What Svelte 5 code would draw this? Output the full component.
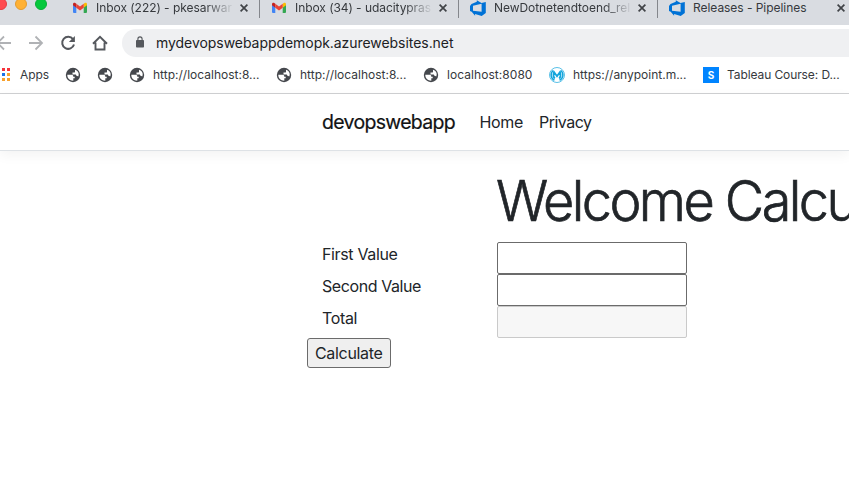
<script>
  const tabs = [
    { icon: 'gmail', label: 'Inbox (222) - pkesarwar', ref: 136, fade: true },
    { icon: 'gmail', label: 'Inbox (34) - udacitypras', ref: 136, fade: true },
    { icon: 'azure', label: 'NewDotnetendtoend_rel', ref: 136, fade: true },
    { icon: 'azure', label: 'Releases - Pipelines', ref: 113.5, fade: false }
  ];
  const bookmarks = [
    { icon: 'globe', gap: 16 },
    { icon: 'globe', gap: 16 },
    { icon: 'globe', label: 'http://localhost:8...', width: 107, gap: 16 },
    { icon: 'globe', label: 'http://localhost:8...', width: 107, gap: 16 },
    { icon: 'globe', label: 'localhost:8080', width: 86, gap: 16 },
    { icon: 'mule', label: 'https://anypoint.m...', width: 114, gap: 16 },
    { icon: 'skill', label: 'Tableau Course: D...', width: 113, gap: 0 }
  ];
  const rows = [
    { label: 'First Value', width: 75.5, disabled: false },
    { label: 'Second Value', width: 99, disabled: false },
    { label: 'Total', width: 35, disabled: true }
  ];

  // Spreads the letters so that the label takes the given width.
  function fit(node, width) {
    node.style.letterSpacing = '0';
    const natural = node.getBoundingClientRect().width;
    node.style.letterSpacing = (width - natural) / node.textContent.length + 'px';
  }
</script>

<div class="browser">
  <div class="strip">
    <div class="lights"><i class="red"></i><i class="amber"></i><i class="green"></i></div>
    {#each tabs as tab}
      <div class="tab">
        {#if tab.icon === 'gmail'}
          <svg class="ticon" viewBox="0 0 16 16">
            <path fill="#4285f4" d="M1 4.500l3.300 2.300V13H2a1 1 0 0 1-1-1z" />
            <path fill="#34a853" d="M15 4.500l-3.300 2.300V13H14a1 1 0 0 0 1-1z" />
            <path fill="#fbbc04" d="M11.700 3.800l1-.7C13.800 2.400 15 3 15 4.300V5.300l-3.300 2.500z" />
            <path fill="#c5221f" d="M4.300 3.800l-1-.7C2.200 2.400 1 3 1 4.300V5.300l3.300 2.500z" />
            <path fill="#ea4335" d="M4.300 3.800L8 6.600l3.700-2.800v4L8 10.600 4.300 7.800z" />
          </svg>
        {:else}
          <svg class="ticon" viewBox="0 0 16 16">
            <path fill="#0072d6" fill-rule="evenodd" d="M0 5.900L1.500 4l5.300-2.200V.2l4.700 2.900L15.800 2v11l-4.100 2.900-6.600-1.800v1.700L1.700 11.700 0 11.100zM3 5.800v5l8.600 1V3.700z" />
          </svg>
        {/if}
        <div class="title" class:fade={tab.fade}><span use:fit={tab.ref}>{tab.label}</span></div>
        <svg class="close" viewBox="0 0 8 8"><path d="M.6.6l6.800 6.800M7.400.6L.6 7.400" /></svg>
      </div>
    {/each}
  </div>

  <div class="toolbar">
    <svg class="nav" viewBox="0 0 112 28" fill="none">
      <g stroke="#b0b2b5" stroke-width="1.8">
        <path d="M-3 14h14M4 7.500L-2.500 14 4 20.500M29 14h13M35.500 7.500L42 14l-6.500 6.500" />
      </g>
      <path stroke="#55585d" stroke-width="2" d="M73 10.200A6 6 0 1 0 74 15.500" />
      <path fill="#55585d" d="M74.900 7v6h-6z" />
      <path stroke="#55585d" stroke-width="1.900" d="M93 14.700l7-6.800 7 6.800M95.500 13.500V20.500h9V13.500" />
    </svg>
    <div class="address">
      <svg class="lock" viewBox="0 0 8 12">
        <rect x="0" y="4" width="8" height="7.500" rx=".8" fill="#55585d" />
        <path d="M1.900 4.500V3a2.100 2.100 0 0 1 4.200 0v1.500" fill="none" stroke="#55585d" stroke-width="1.100" />
      </svg>
      <span use:fit={297.5}>mydevopswebappdemopk.azurewebsites.net</span>
    </div>
  </div>

  <div class="bookmarks">
    <svg class="apps" viewBox="0 0 10 13">
      <g fill="#f5333b"><rect x="0" y="0" width="3" height="3" /><rect x="5" y="0" width="3" height="3" /></g>
      <rect x="0" y="5" width="3" height="3" fill="#1a73e8" />
      <g fill="#f8a12c"><rect x="5" y="5" width="3" height="3" /><rect x="0" y="10" width="3" height="3" /><rect x="5" y="10" width="3" height="3" /></g>
    </svg>
    <div class="appslabel"><span use:fit={29}>Apps</span></div>
    {#each bookmarks as mark}
      <div class="mark" style="margin-right: {mark.gap}px">
        {#if mark.icon === 'globe'}
          <svg class="bicon" viewBox="0 0 16 16">
            <circle cx="8" cy="8" r="7.200" fill="#45484d" />
            <path fill="#fff" d="M2.300 7.800h4.200c1.200 0 1.700.6 1.700 1.300v.6h1.500v1.600H8.300v2.400C4.800 13.700 2.200 11.300 2.300 7.800zM10 2.700c1.700.5 3.100 1.800 3.600 3.500.3 1.200.1 2.300-.4 3.300-.5-.6-1.100-.7-1.800-.7l-.6-1.300H7.500V5.600H9c.9 0 1-.6 1-1.200z" />
          </svg>
        {:else if mark.icon === 'mule'}
          <svg class="bicon" viewBox="0 0 16 16" fill="none" stroke="#13a5dc">
            <circle cx="8" cy="8" r="7.500" stroke-width=".7" />
            <path stroke-width="1.500" d="M5.400 13.200A5.800 5.800 0 0 1 4.200 3.500M10.600 13.200a5.800 5.800 0 0 0 1.200-9.700" />
            <path stroke-width="1.800" d="M5.800 11.500C4.300 10 4.200 7.500 5 5L8 9.200 11 5c.8 2.500.7 5-.8 6.500" />
          </svg>
        {:else}
          <div class="skill">S</div>
        {/if}
        {#if mark.label}
          <div class="mlabel" style="width: {mark.width}px"><span use:fit={mark.width - 0.5}>{mark.label}</span></div>
        {/if}
      </div>
    {/each}
  </div>
</div>

<header>
  <a class="brand" href="#home"><span use:fit={133}>devopswebapp</span></a>
  <a class="home" href="#home"><span use:fit={43.5}>Home</span></a>
  <a href="#privacy"><span use:fit={52.5}>Privacy</span></a>
</header>

<main>
  <h1>Welcome Calculator</h1>
  <form>
    {#each rows as row}
      <div class="row">
        <label for={row.label}><span use:fit={row.width}>{row.label}</span></label>
        <input id={row.label} type="text" disabled={row.disabled} />
      </div>
    {/each}
    <button type="button"><span use:fit={67.5}>Calculate</span></button>
  </form>
</main>

<style>
  :global(body) { margin: 0; overflow: hidden; background: #fff; }
  :global(#app) { height: 488px; overflow: hidden; font-family: Inter, Roboto, "Liberation Sans", sans-serif; color: #212529; }
  span { display: inline-block; white-space: pre; }
  svg { display: block; flex: none; }
  .browser { height: 93px; border-bottom: 1px solid #d0d1d3; font-size: 12px; color: #36393d; overflow: hidden; }
  .strip { display: flex; height: 25px; background: #d9dce1; }
  .lights { display: flex; gap: 8px; width: 66px; margin-left: -5px; flex: none; }
  .lights i { flex: none; box-sizing: border-box; width: 12px; height: 12px; margin-top: -2px; border-radius: 50%; }
  .red { background: #ff4b50; border: 1px solid #e33e43; }
  .amber { background: #ffb134; border: 1px solid #e39b2f; }
  .green { background: #05c83c; border: 1px solid #09ad38; }
  .tab { display: flex; flex: none; box-sizing: border-box; width: 199px; height: 18px; padding-left: 11px; border-right: 1px solid #84878c; }
  .tab:last-child { border: 0; }
  .ticon { width: 16px; height: 16px; }
  .title { width: 137px; margin-left: 8px; line-height: 15px; }
  .fade { -webkit-mask-image: linear-gradient(to right, #000 80%, transparent 101%); mask-image: linear-gradient(to right, #000 80%, transparent 101%); }
  .close { width: 8px; height: 8px; margin: 4px 0 0 7px; stroke: #404347; stroke-width: 1.7; }
  .toolbar { display: flex; height: 28px; padding-top: 4px; }
  .nav { width: 112px; height: 28px; }
  .address { display: flex; flex: none; align-items: center; width: 760px; height: 28px; margin-left: 10px; box-sizing: border-box; padding: 0 0 2px 14px; border-radius: 14px; background: #eff0f2; font-size: 14px; color: #202124; }
  .lock { width: 8px; height: 12px; margin-right: 12px; }
  .bookmarks { display: flex; height: 36px; align-items: center; }
  .apps { width: 10px; height: 13px; margin: -1px 8px 0 2px; }
  .appslabel { width: 45px; padding-bottom: 2px; }
  .mark { display: flex; flex: none; align-items: center; }
  .bicon { width: 16px; height: 16px; }
  .mlabel { margin-left: 8px; padding-bottom: 2px; }
  .skill { width: 16px; height: 16px; background: #0084ff; color: #fff; font-weight: 700; font-size: 10px; line-height: 16px; text-align: center; }
  header { display: flex; align-items: center; box-sizing: border-box; height: 57px; padding-left: 322px; border-bottom: 1px solid #dee2e6; box-shadow: 0 4px 12px rgba(0, 0, 0, .05); }
  a { color: #212529; text-decoration: none; font-size: 16px; line-height: 24px; }
  .brand { width: 157.5px; font-size: 19.5px; color: #111213; -webkit-text-stroke: .2px #111213; }
  .home { width: 59.5px; }
  h1 { margin: 16px 0 7px 496px; font-size: 56px; font-weight: 300; line-height: 68px; letter-spacing: -2.65px; white-space: nowrap; transform: scaleX(.965); transform-origin: left; -webkit-text-stroke: .7px #212529; }
  form { padding-left: 307px; }
  .row { display: flex; height: 32px; }
  label { width: 190px; padding-left: 15px; box-sizing: border-box; font-size: 16px; line-height: 24px; }
  input { box-sizing: border-box; width: 190px; height: 32px; margin: 0; border: 1px solid #6b6b6b; border-radius: 2px; background: #fff; }
  input:disabled { background: #f7f7f7; border-color: #cacaca; }
  button { display: block; box-sizing: border-box; width: 84px; height: 30px; padding: 0 0 0 7px; border: 1px solid #6b6b6b; border-radius: 3px; background: #efefef; color: #212529; font: 16px/28px Inter, Roboto, sans-serif; text-align: left; }
</style>
